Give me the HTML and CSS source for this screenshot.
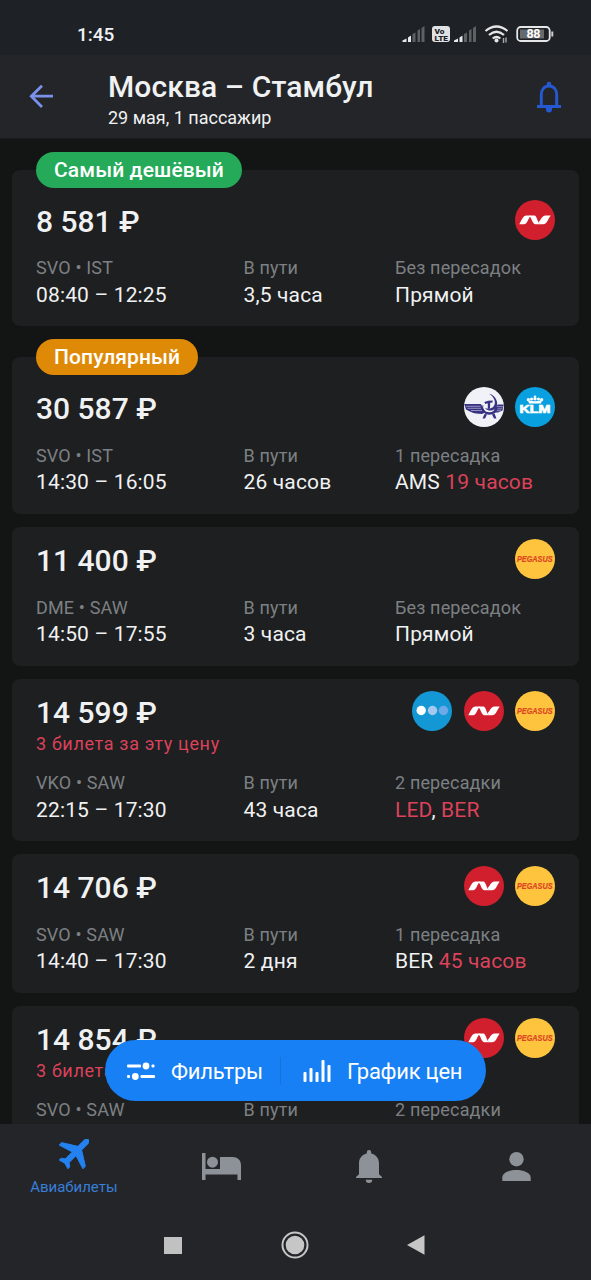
FILE: index.html
```html
<!DOCTYPE html>
<html lang="ru">
<head>
<meta charset="utf-8">
<title>Москва – Стамбул</title>
<link rel="stylesheet" href="styles.css">
</head>
<body>
<svg class="defs" width="0" height="0">
  <symbol id="nordwind" viewBox="0 0 40 40">
    <circle cx="20" cy="20" r="20" fill="#d11f2e"/>
    <path d="M4.300 24.300C6.500 20.500 8 15.500 11.500 15.500h4.300C13 18.500 12.500 24.300 9 24.300z" fill="#fff"/>
    <path d="M14.800 15.500h4.700c2 0 3 6.300 5.300 8.800h-4.300c-2.600 0-3.200-4.500-5.700-7.800z" fill="#fff"/>
    <path d="M23.700 22C26.300 19.500 27 15.500 30.500 15.500h5.200C33 19 32 24.300 28 24.300h-3.500z" fill="#fff"/>
  </symbol>
  <symbol id="pegasus" viewBox="0 0 40 40">
    <circle cx="20" cy="20" r="20" fill="#ffc43d"/>
    <text x="2" y="22.800" textLength="35.500" lengthAdjust="spacingAndGlyphs" class="pegasus-word">PEGASUS</text>
  </symbol>
  <symbol id="klm" viewBox="0 0 40 40">
    <circle cx="20" cy="20" r="20" fill="#08a0de"/>
    <g fill="#fff">
      <text x="4.500" y="26.300" textLength="31" lengthAdjust="spacingAndGlyphs" class="klm-word">KLM</text>
      <path d="M14 16.600l-1-3.300q3.500 1 7 1t7-1l-1 3.300z"/>
      <circle cx="13.300" cy="12.700" r="1.600"/><circle cx="16.500" cy="12" r="1.500"/><circle cx="20" cy="11.700" r="1.700"/><circle cx="23.500" cy="12" r="1.500"/><circle cx="26.700" cy="12.700" r="1.600"/>
      <path d="M19.500 8.300h1v3h-1zM18.700 9.200h2.600v.8h-2.600z"/>
    </g>
  </symbol>
  <symbol id="aeroflot" viewBox="0 0 40 40">
    <circle cx="20" cy="20" r="20" fill="#f1f1f8"/>
    <path d="M.3 17H17l1.500 4 2.500 4.500-3 1.500c-4-.5-8-.5-11-2L2 22.500zM39.700 17.500h-6L31 21l-1 4.500h4l4.500-2z" fill="#383282"/>
    <path d="M2 19.300h14.500M3.500 21.300H17M7 23.500h11M33 19.700h6M32 21.800h6M31 23.700h6" stroke="#f1f1f8" stroke-width=".5"/>
    <path d="M18.200 18.500c0 5 3 8 7 8s6.800-2.500 7.300-6" fill="none" stroke="#383282" stroke-width="2.400"/>
    <path d="M19 19c.5 3.500 3 5.500 6 5.500" fill="none" stroke="#f1f1f8" stroke-width=".8"/>
    <path d="M25 6.700c7 1.500 10.500 10 6.500 14.500-3 3.300-7.500 3.200-10.500-.2 3.500 1.300 6.500.7 8.500-1.500 3-3.500 1-9.800-4.500-12.800z" fill="#383282"/>
    <path d="M20.500 27l-2 4.500h2.500l2-4zM28 27.500l2 4h2.500l-2-5z" fill="#383282"/>
    <path d="M20.300 15l4-1.300 4.200-.2.200 2-2.500.3-.2 6h-2.200v-5.500l-2.500.8z" fill="#383282"/>
  </symbol>
  <symbol id="dots" viewBox="0 0 40 40">
    <circle cx="20" cy="20" r="20" fill="#1497d5"/>
    <circle cx="9.200" cy="19.500" r="4.700" fill="#fff"/><circle cx="20.500" cy="19.500" r="4.700" fill="#a5c8ef"/><circle cx="31.500" cy="19.500" r="4.700" fill="#70a9e8"/>
  </symbol>
</svg>

<div class="screen">
  <div class="status">
    <span class="clock">1:45</span>
    <svg class="status-icons" width="153" height="20" viewBox="402 24 153 20">
      <g fill="#e8e9ea"><path d="M402.500 42v-1.500l4-2V42zM408 42v-4.500l3-2V42zM454 42v-1.500l4-2V42zM459.500 42v-4.500l3-2V42z"/></g>
      <g fill="#5d6164"><path d="M412.500 34l3-1.500V42h-3zM417.500 30.500l2.500-1.500v13h-2.500zM421.500 28l3-2v16h-3zM464 34l3-1.500V42h-3zM469 30.500l2.500-1.500v13H469zM473 28l3-2v16h-3z"/></g>
      <rect x="432" y="26" width="18" height="16" rx="3" fill="#e1e2e3"/>
      <text x="434.500" y="33.500" class="volte" textLength="10" lengthAdjust="spacingAndGlyphs">Vo</text><text x="434.500" y="41" class="volte" textLength="13.500" lengthAdjust="spacingAndGlyphs">LTE</text>
      <g fill="none" stroke="#e5e6e7" stroke-width="2.200"><path d="M485.500 31q11-9 22 0M489 35q7.500-6.500 15 0M492.700 38.500q3.800-3 7.600 0"/></g>
      <circle cx="496.500" cy="40.500" r="2" fill="#e5e6e7"/>
      <path d="M503.500 38v5M506 37.500v5" stroke="#a5a7a9" stroke-width="1.400"/>
      <rect x="517.200" y="27" width="32.500" height="14" rx="3.500" fill="none" stroke="#e5e6e7" stroke-width="1.800"/>
      <rect x="520" y="29.500" width="24" height="9" fill="#666a6d"/>
      <path d="M552.300 31.500v5" stroke="#ccc" stroke-width="2"/>
      <text x="526.500" y="38.300" class="battery" textLength="14">88</text>
    </svg>
  </div>

  <header class="header">
    <svg class="back" width="24" height="24" viewBox="0 0 24 24" fill="none" stroke="#7a91ea" stroke-width="2.800"><path d="M24 11.200H2.500M13 .7L2.300 11.200 13 22"/></svg>
    <div class="heading">
      <h1 class="title">Москва – Стамбул</h1>
      <div class="subtitle">29 мая, 1 пассажир</div>
    </div>
    <svg class="alert" width="26" height="32" viewBox="0 0 26 32"><path d="M5.300 25.500V14c0-5.500 3-9 7.700-9s7.700 3.500 7.700 9v11.500M1 25.500h24" fill="none" stroke="#2459d2" stroke-width="2.900"/><path d="M10.800 5V3a2.200 2.200 0 014.400 0v2zM10 26h6v2.500a3 3 0 01-6 0z" fill="#2459d2"/></svg>
  </header>

  <main class="list">
    <article class="card tagged">
      <span class="tag cheap">Самый дешёвый</span>
      <div class="top"><div class="price">8 581 ₽</div><div class="logos"><svg class="logo"><use href="#nordwind"/></svg></div></div>
      <div class="info"><span class="label">SVO • IST</span><span class="label">В пути</span><span class="label">Без пересадок</span>
      <span class="value">08:40 – 12:25</span><span class="value">3,5 часа</span><span class="value">Прямой</span></div>
    </article>
    <article class="card tagged">
      <span class="tag popular">Популярный</span>
      <div class="top"><div class="price">30 587 ₽</div><div class="logos"><svg class="logo"><use href="#aeroflot"/></svg><svg class="logo"><use href="#klm"/></svg></div></div>
      <div class="info"><span class="label">SVO • IST</span><span class="label">В пути</span><span class="label">1 пересадка</span>
      <span class="value">14:30 – 16:05</span><span class="value">26 часов</span><span class="value">AMS <b class="warn">19 часов</b></span></div>
    </article>
    <article class="card">
      <div class="top"><div class="price">11 400 ₽</div><div class="logos"><svg class="logo"><use href="#pegasus"/></svg></div></div>
      <div class="info"><span class="label">DME • SAW</span><span class="label">В пути</span><span class="label">Без пересадок</span>
      <span class="value">14:50 – 17:55</span><span class="value">3 часа</span><span class="value">Прямой</span></div>
    </article>
    <article class="card">
      <div class="top"><div class="price">14 599 ₽</div><div class="logos"><svg class="logo"><use href="#dots"/></svg><svg class="logo"><use href="#nordwind"/></svg><svg class="logo"><use href="#pegasus"/></svg></div></div>
      <div class="note">3 билета за эту цену</div>
      <div class="info"><span class="label">VKO • SAW</span><span class="label">В пути</span><span class="label">2 пересадки</span>
      <span class="value">22:15 – 17:30</span><span class="value">43 часа</span><span class="value"><b class="warn">LED</b>, <b class="warn">BER</b></span></div>
    </article>
    <article class="card">
      <div class="top"><div class="price">14 706 ₽</div><div class="logos"><svg class="logo"><use href="#nordwind"/></svg><svg class="logo"><use href="#pegasus"/></svg></div></div>
      <div class="info"><span class="label">SVO • SAW</span><span class="label">В пути</span><span class="label">1 пересадка</span>
      <span class="value">14:40 – 17:30</span><span class="value">2 дня</span><span class="value">BER <b class="warn">45 часов</b></span></div>
    </article>
    <article class="card">
      <div class="top"><div class="price">14 854 ₽</div><div class="logos"><svg class="logo"><use href="#nordwind"/></svg><svg class="logo"><use href="#pegasus"/></svg></div></div>
      <div class="note">3 билета</div>
      <div class="info"><span class="label">SVO • SAW</span><span class="label">В пути</span><span class="label">2 пересадки</span></div>
    </article>
  </main>

  <div class="actions">
    <div class="action filters">
      <svg width="28" height="18" viewBox="0 0 28 18" fill="#fff"><rect y="2.600" width="14" height="3" rx="1"/><circle cx="19" cy="4" r="3.400"/><rect x="24.500" y="2.600" width="3" height="3" rx="1"/><rect y="13" width="3" height="3" rx="1"/><circle cx="8.300" cy="14.500" r="3.400"/><rect x="13.500" y="13" width="14.500" height="3" rx="1"/></svg>
      <span>Фильтры</span>
    </div>
    <div class="action chart">
      <svg width="28" height="22" viewBox="0 0 28 22" fill="#fff"><rect x=".5" y="12" width="3" height="10" rx="1"/><rect x="6.500" y="8" width="3" height="14" rx="1"/><rect x="12.500" y="12" width="3" height="10" rx="1"/><rect x="18.500" y="0" width="3" height="22" rx="1"/><rect x="24.500" y="5" width="3" height="17" rx="1"/></svg>
      <span>График цен</span>
    </div>
  </div>

  <nav class="tabs">
    <div class="tab active">
      <svg width="30" height="30" viewBox="2 4.300 17 17"><path transform="rotate(45 12 12)" d="M21 16v-2l-8-5V3.500c0-.83-.67-1.500-1.500-1.500S10 2.670 10 3.500V9l-8 5v2l8-2.500V19l-2 1.500V22l3.500-1 3.500 1v-1.500L13 19v-5.500l8 2.500z" fill="#2382ef" stroke="#2382ef" stroke-width=".5" stroke-linejoin="round"/></svg>
      <span>Авиабилеты</span>
    </div>
    <div class="tab"><svg width="39" height="27" viewBox="0 0 39 27" fill="#8d9298"><path d="M0 0h3.500v16H18V4h12.500c5 0 8.500 3 8.500 8v15h-3.500v-5.500h-32V27H0z"/><circle cx="10.500" cy="9.200" r="5.500"/></svg></div>
    <div class="tab"><svg width="26" height="33" viewBox="0 0 26 33" fill="#8d9298"><path d="M10.800 3.500V2.200a2.200 2.200 0 014.400 0v1.300c4.800 1.200 7.800 4.800 7.800 9.700v11l3 2.800v1H0v-1l3-2.800v-11c0-4.900 3-8.500 7.800-9.700zM9.800 29.700h6.400a3.200 3.200 0 01-6.400 0z"/></svg></div>
    <div class="tab"><svg width="29" height="29" viewBox="0 0 29 29" fill="#8d9298"><circle cx="14.500" cy="7.200" r="7.200"/><path d="M.3 29v-3.500C.3 20.500 8 18 14.500 18s14.200 2.500 14.200 7.500V29z"/></svg></div>
  </nav>

  <div class="system">
    <svg width="18" height="17"><rect width="18" height="17" fill="#c1c1c1"/></svg>
    <svg width="28" height="28" viewBox="0 0 28 28"><circle cx="14" cy="14" r="12.500" fill="none" stroke="#c6c6c6" stroke-width="2"/><circle cx="14" cy="14" r="9.300" fill="#c6c6c6"/></svg>
    <svg width="18" height="20" viewBox="0 0 18 20"><path d="M17.500.300v19.400L0 10z" fill="#c6c6c6"/></svg>
  </div>
</div>
</body>
</html>
```
FILE: styles.css
```css
* { box-sizing: border-box; }
body { margin: 0; background: #131414; font-family: Roboto, "Noto Sans", sans-serif; color: #f0f1f2; }
svg { display: block; flex: none; }
.defs { display: none; }
.screen { position: relative; width: 591px; height: 1280px; display: flex; flex-direction: column; overflow: hidden; }

.status { height: 55px; flex: none; display: flex; justify-content: space-between; align-items: center; padding: 13px 36px 0 77px; background: #1e2226; }
.clock { font-size: 19px; font-weight: 500; letter-spacing: 0; line-height: 22px; padding-top: 1px; }
.volte { font-size: 8px; font-weight: 900; fill: #1e2226; }
.battery { font-size: 12.500px; font-weight: 700; fill: #fff; }

.header { height: 84px; flex: none; display: flex; align-items: center; padding: 0 29px; background: #242528; border-bottom: 1px solid #1b1c1d; }
.heading { flex: 1; padding: 5px 0 0 55px; }
.title { margin: 0; font-size: 30px; font-weight: 500; letter-spacing: .1px; line-height: 36px; white-space: nowrap; }
.subtitle { font-size: 18px; line-height: 25px; }

.list { flex: 1; min-height: 0; overflow: hidden; display: flex; flex-direction: column; gap: 13px; padding: 0 12px; }
.card { position: relative; flex: none; padding: 12px 24px 16.600px; border-radius: 8px; background: #1d1f21; }
.tagged { margin-top: 18px; padding-top: 30px; }
.tagged:first-child { margin-top: 30.900px; }
.tag { position: absolute; left: 24px; top: -18px; height: 36px; padding: 0 18px; border-radius: 18px; font-size: 21px; font-weight: 500; letter-spacing: .12px; line-height: 36px; color: #fff; white-space: nowrap; }
.cheap { background: #24aa59; }
.popular { background: #df8a07; }
.top { height: 40px; display: flex; justify-content: space-between; }
.price { font-size: 30px; font-weight: 500; line-height: 43px; white-space: nowrap; }
.logos { display: flex; gap: 11.500px; }
.logo { width: 40px; height: 40px; }
.pegasus-word { font-family: "Liberation Sans", sans-serif; font-size: 8.600px; font-weight: 700; font-style: italic; fill: #dc4523; stroke: #dc4523; stroke-width: .2px; }
.klm-word { font-family: "Liberation Sans", sans-serif; font-size: 11px; font-weight: 700; stroke: #fff; stroke-width: .7px; }
.note { height: 24px; line-height: 26px; font-size: 18px; letter-spacing: .66px; color: #dc425a; }
.info { display: grid; grid-template-columns: 207.500px 151.500px 1fr; grid-template-rows: 24px 30px; margin-top: 16px; align-items: center; white-space: nowrap; }
.label { font-size: 18px; color: #7d8083; letter-spacing: .15px; }
.value { font-size: 21px; letter-spacing: .15px; }
.warn { font-weight: 400; color: #dc425a; }

.actions { position: absolute; left: 105px; top: 1040px; width: 381px; height: 61px; border-radius: 31px; background: #1880f5; display: flex; align-items: center; font-size: 22px; letter-spacing: -.25px; color: #fff; white-space: nowrap; }
.action { display: flex; align-items: center; gap: 16px; height: 28px; }
.action span { padding-top: 2px; }
.filters { width: 176px; padding-left: 22px; border-right: 1px solid #1672dc; }
.chart { padding-left: 22px; }

.tabs { height: 86px; flex: none; display: grid; grid-template-columns: repeat(4, 1fr); background: #242528; }
.tab { display: flex; flex-direction: column; align-items: center; justify-content: center; padding: 0 1px 1px 0; }
.active { justify-content: flex-start; padding: 15px 0 0; font-size: 15px; line-height: 18px; gap: 9px; color: #377fd8; }
.system { height: 70px; flex: none; display: flex; align-items: center; justify-content: space-between; padding: 0 166px 0 164px; background: #242528; }
```
